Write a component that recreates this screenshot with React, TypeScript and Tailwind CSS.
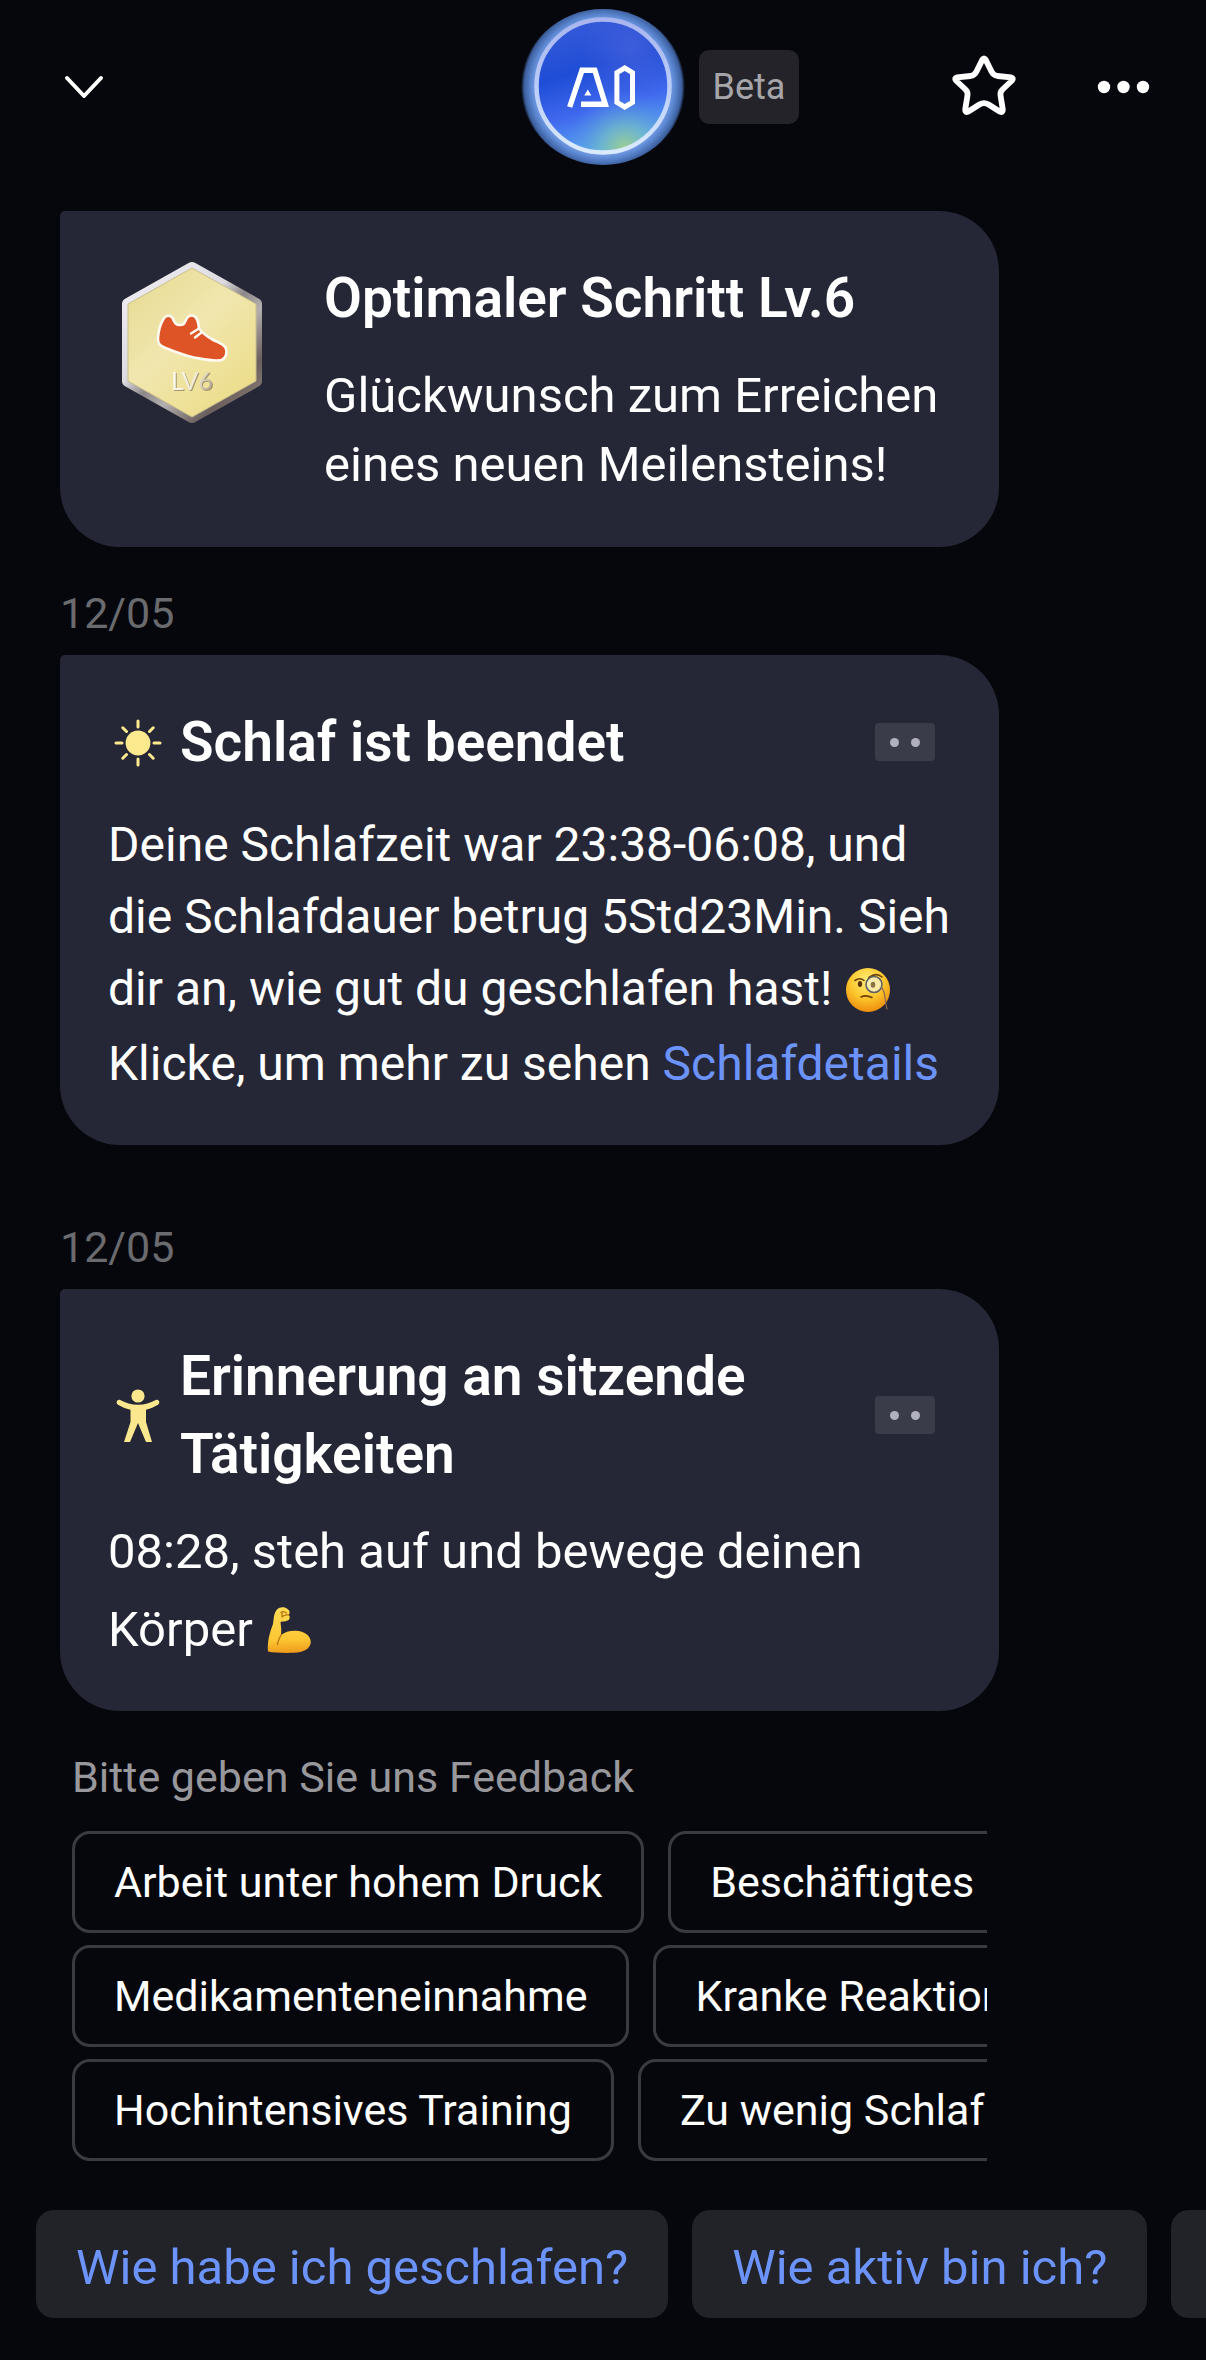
import * as React from "react";

type CardProps = {
  children: React.ReactNode;
};

const FEEDBACK_ROWS = [
  ["Arbeit unter hohem Druck", "Beschäftigtes"],
  ["Medikamenteneinnahme", "Kranke Reaktion"],
  ["Hochintensives Training", "Zu wenig Schlaf"],
];

const SUGGESTIONS = [
  "Wie habe ich geschlafen?",
  "Wie aktiv bin ich?",
  "Mein Trainingsplan?",
];

function ChevronIcon() {
  return (
    <svg viewBox="0 0 48 48" className="size-12" fill="none" aria-hidden="true">
      <path d="M7 15 24 33 41 15" stroke="#fff" strokeWidth="4" strokeLinecap="round" strokeLinejoin="round" />
    </svg>
  );
}

function StarIcon() {
  return (
    <svg viewBox="0 0 66 66" className="size-[66px]" fill="none" aria-hidden="true">
      <path
        d="M31.4 5.6Q33 3 34.6 5.6L40.5 17.5Q42.3 21.3 46.5 22L60 23.3Q63 24 61 26.5L51.5 35.5Q48.8 38.3 49.6 42L51.8 55.5Q52 59 49 57.7L37.2 50.3Q33 48 28.8 50.3L17 57.7Q14 59 14.2 55.5L16.4 42Q17.2 38.3 14.5 35.5L5 26.5Q3 24 6 23.3L19.5 22Q23.7 21.3 25.5 17.5Z"
        stroke="#fff"
        strokeWidth="5.8"
        strokeLinejoin="round"
      />
    </svg>
  );
}

function MoreIcon() {
  return (
    <svg viewBox="0 0 60 24" className="h-6 w-[60px]" fill="#fff" aria-hidden="true">
      <circle cx="10" cy="12" r="6.2" />
      <circle cx="29.5" cy="12" r="6.2" />
      <circle cx="49" cy="12" r="6.2" />
    </svg>
  );
}

function AiLogo() {
  return (
    <svg viewBox="0 0 168 168" className="size-[168px]" fill="none" role="img" aria-label="AI">
      <defs>
        <linearGradient id="ai-disc" x1="60" y1="20" x2="96" y2="150" gradientUnits="userSpaceOnUse">
          <stop offset="0" stopColor="#3459d8" />
          <stop offset="0.35" stopColor="#1f4dd6" />
          <stop offset="0.65" stopColor="#3f68ee" />
          <stop offset="1" stopColor="#5fb4f0" />
        </linearGradient>
        <radialGradient id="ai-glow" cx="106" cy="146" r="60" gradientUnits="userSpaceOnUse">
          <stop offset="0" stopColor="#9fd08c" />
          <stop offset="0.4" stopColor="#74bcc4" stopOpacity="0.7" />
          <stop offset="1" stopColor="#4d86f0" stopOpacity="0" />
        </radialGradient>
        <radialGradient id="ai-violet" cx="112" cy="46" r="50" gradientUnits="userSpaceOnUse">
          <stop offset="0" stopColor="#4460dc" stopOpacity="0.8" />
          <stop offset="1" stopColor="#4460dc" stopOpacity="0" />
        </radialGradient>
        <radialGradient id="ai-halo" cx="84" cy="84" r="82" gradientUnits="userSpaceOnUse">
          <stop offset="0.78" stopColor="#86aaf0" />
          <stop offset="0.88" stopColor="#5a86d0" />
          <stop offset="0.96" stopColor="#3d609f" />
          <stop offset="1" stopColor="#3d609f" stopOpacity="0" />
        </radialGradient>
        <linearGradient id="ai-ring" x1="84" y1="14" x2="84" y2="152" gradientUnits="userSpaceOnUse">
          <stop offset="0" stopColor="#a9b4ee" />
          <stop offset="0.5" stopColor="#b9ccfa" />
          <stop offset="1" stopColor="#dcecff" />
        </linearGradient>
      </defs>
      <ellipse cx="84" cy="84" rx="82" ry="78" fill="url(#ai-halo)" />
      <circle cx="84" cy="83" r="66" fill="url(#ai-disc)" />
      <circle cx="84" cy="83" r="66" fill="url(#ai-violet)" />
      <circle cx="84" cy="83" r="66" fill="url(#ai-glow)" />
      <circle cx="84" cy="83" r="66.5" stroke="url(#ai-ring)" strokeWidth="4.5" />
      <polyline points="50.7,104 63,67.3 75.8,67.3 86.3,101.2 62,101.2" stroke="#fff" strokeWidth="5.4" />
      <path d="M68.8 86.5 72.3 92.5H65.3Z" fill="#fff" />
      <path d="M105.7 65 113.5 69.6V99.4L105.7 104 97.9 99.4V69.6Z" stroke="#fff" strokeWidth="5" />
    </svg>
  );
}

function StepBadge() {
  return (
    <svg viewBox="0 0 168 168" className="size-[168px] shrink-0" fill="none" role="img" aria-label="Schritt-Abzeichen">
      <defs>
        <linearGradient id="badge-rim" x1="20" y1="20" x2="150" y2="150" gradientUnits="userSpaceOnUse">
          <stop offset="0" stopColor="#f0eef2" />
          <stop offset="0.38" stopColor="#dcdbe0" />
          <stop offset="0.5" stopColor="#8c8788" />
          <stop offset="0.62" stopColor="#b5b0b0" />
          <stop offset="0.82" stopColor="#6a5f5c" />
          <stop offset="1" stopColor="#8d827b" />
        </linearGradient>
        <linearGradient id="badge-face" x1="30" y1="20" x2="140" y2="140" gradientUnits="userSpaceOnUse">
          <stop offset="0" stopColor="#e7dc95" />
          <stop offset="0.45" stopColor="#f1e6ae" />
          <stop offset="1" stopColor="#ecdd88" />
        </linearGradient>
        <linearGradient id="badge-level" x1="64" y1="112" x2="104" y2="132" gradientUnits="userSpaceOnUse">
          <stop offset="0" stopColor="#fffdf5" />
          <stop offset="0.6" stopColor="#efe8d8" />
          <stop offset="1" stopColor="#a89a86" />
        </linearGradient>
      </defs>
      <path
        d="M84 9 148 45V122L84 158 20 122V45Z"
        fill="url(#badge-rim)"
        stroke="url(#badge-rim)"
        strokeWidth="12"
        strokeLinejoin="round"
      />
      <path d="M84 9 148 45V122L84 158 20 122V45Z" fill="url(#badge-face)" stroke="#c9bf8d" />
      <path
        d="M50 79C50.5 71 53 64 55.5 60C57.5 56 62 55.5 64.5 59C66 61 66 64.5 69 65.5C72.5 66.5 76 66 77.5 62C79 57.5 82.5 55.5 86 57C90 59 90.5 64 91 69.5C94.5 74 99 77.5 104.5 80.5C109 83 115 84.500 117.5 88.5C119.500 93 118.5 99 113.5 101C107 103 95 100 84.9 98.3C75 96 65 92 56.3 88.5C51.5 86 49.5 84 50 79Z"
        fill="#de5426"
        stroke="#fffaf0"
        strokeWidth="2.6"
        strokeLinejoin="round"
      />
      <path d="M83 74.5 91 69.5M87 78.5 93.5 73.5" stroke="#fffaf0" strokeWidth="2.4" strokeLinecap="round" />
      <text
        x="84"
        y="131"
        textAnchor="middle"
        fill="url(#badge-level)"
        className="font-['Lato',sans-serif] text-[25px] font-normal drop-shadow-[1px_1px_0_#a39568]"
      >
        LV6
      </text>
    </svg>
  );
}

function SunIcon() {
  return (
    <svg viewBox="0 0 60 60" className="size-[60px] shrink-0" aria-hidden="true">
      <circle cx="30" cy="31" r="12.4" fill="#fde98e" />
      <path
        d="M30 9V15M30 47V53M8 31H14M46 31H52M14.8 15.8 18.5 19.5M41.5 42.5 45.2 46.2M14.8 46.2 18.5 42.5M41.5 19.5 45.2 15.8"
        stroke="#fde98e"
        strokeWidth="3"
        strokeLinecap="round"
      />
    </svg>
  );
}

function PersonIcon() {
  return (
    <svg viewBox="0 0 60 60" className="size-[60px] shrink-0" fill="#fbe88e" aria-hidden="true">
      <circle cx="30" cy="11" r="6.6" />
      <path d="M12.2 15C18 18.200 23 19.7 30 19.7S42 18.2 47.8 15C51 14 52.7 18 50 19.7C46 22 42.5 23.6 38 24.8V37L44 57H38L30 38 22 57H16L22.5 37V24.8C17.5 23.6 14 22 10 19.7C7.3 18 9 14 12.2 15Z" />
    </svg>
  );
}

function MonocleEmoji() {
  return (
    <svg viewBox="0 0 48 48" className="inline-block size-12 align-[-9px]" fill="none" role="img" aria-label="🧐">
      <defs>
        <radialGradient id="face" cx="23" cy="15" r="30" gradientUnits="userSpaceOnUse">
          <stop offset="0" stopColor="#fff07a" />
          <stop offset="0.55" stopColor="#fdc92f" />
          <stop offset="1" stopColor="#f0920f" />
        </radialGradient>
      </defs>
      <circle cx="24" cy="24" r="22" fill="url(#face)" />
      <path d="M11 14.5Q16 11 20 14.5M25 11.5Q32 6 38 11" stroke="#6b3f0b" strokeWidth="1.6" strokeLinecap="round" />
      <ellipse cx="16" cy="18" rx="2.2" ry="3" fill="#5a330a" />
      <circle cx="30" cy="18.5" r="8" fill="#f7f0c8" fillOpacity="0.75" stroke="#5f6066" strokeWidth="1.6" />
      <ellipse cx="29" cy="18.8" rx="2.3" ry="3" fill="#8a7340" />
      <path d="M37.5 21.5C42 26 40.5 34 43 43" stroke="#8a6a55" strokeWidth="1.2" strokeLinecap="round" />
      <path d="M17 31Q22 28.5 28 31.5" stroke="#6b3f0b" strokeWidth="1.6" strokeLinecap="round" />
    </svg>
  );
}

function MuscleEmoji() {
  return (
    <svg viewBox="0 0 48 48" className="inline-block size-12 align-[-8px]" fill="none" role="img" aria-label="💪">
      <defs>
        <linearGradient id="arm" x1="24" y1="2" x2="26" y2="47" gradientUnits="userSpaceOnUse">
          <stop offset="0" stopColor="#ffdc55" />
          <stop offset="0.7" stopColor="#fdc633" />
          <stop offset="1" stopColor="#ee9a1a" />
        </linearGradient>
      </defs>
      <path
        d="M12 3.5C15 0.5 20 0.8 22.5 3C25 4.5 25 7 23.8 9C25.5 11 24.8 13.8 22.5 14.5C20 16 17.5 15 15.5 16C15.8 20 16.8 24 16 29C20 26 25 24.5 31 24.8C39 25 45.5 29.5 45.8 36C45.5 43 38 46.5 29 46.8C19 47.2 9 46.8 3 45.5C2.2 36 4.5 27 8 18C9 12 8.8 7 12 3.5Z"
        fill="url(#arm)"
      />
      <path
        d="M16 29C14 33 12.5 36 12.5 38.5M16 6.5Q18.5 4.5 21.5 7M17.5 10.5Q20.5 8 23.5 9.2M17 6.5V11"
        stroke="#b8740f"
        strokeWidth="1.3"
        strokeLinecap="round"
      />
    </svg>
  );
}

function CardMenuButton() {
  return (
    <button
      type="button"
      aria-label="Kartenoptionen"
      className="flex h-[38px] w-[60px] shrink-0 items-center justify-center gap-3 rounded bg-[#3b3c4a]"
    >
      <span className="size-[9px] rounded-full bg-[#b0b0be]" />
      <span className="size-[9px] rounded-full bg-[#b0b0be]" />
    </button>
  );
}

function MessageCard({ children }: CardProps) {
  return (
    <article className="rounded-[60px] rounded-tl-[5px] bg-[#262736] px-12 pt-12 pb-[42px]">
      {children}
    </article>
  );
}

function CardHeading({ icon, title }: { icon: React.ReactNode; title: string }) {
  return (
    <div className="flex items-center gap-3 pr-4">
      {icon}
      <h2 className="flex-1 pr-20 text-[55px] leading-[78px] font-semibold">{title}</h2>
      <CardMenuButton />
    </div>
  );
}

function DateLabel({ children }: CardProps) {
  return <p className="mb-3 text-[43px] leading-[60px] text-[#6a6b6f]">{children}</p>;
}

export default function App() {
  return (
    <div className="flex min-h-screen flex-col overflow-hidden bg-[#06070c] font-['Roboto',sans-serif] text-white">
      <header className="grid h-[174px] grid-cols-[1fr_auto_1fr] items-center">
        <button type="button" aria-label="Schließen" className="ml-15 justify-self-start">
          <ChevronIcon />
        </button>
        <AiLogo />
        <div className="flex items-center pr-[52px] pl-3">
          <span className="flex h-[74px] w-[100px] items-center justify-center rounded-[10px] bg-[#242329] text-[36px] text-[#a6a5a9]">
            Beta
          </span>
          <button type="button" aria-label="Favorit" className="ml-auto">
            <StarIcon />
          </button>
          <button type="button" aria-label="Mehr" className="ml-[77px]">
            <MoreIcon />
          </button>
        </div>
      </header>

      <main className="pt-[37px] pr-[207px] pl-15">
        <article className="flex items-start gap-12 rounded-[60px] rounded-tl-[5px] bg-[#262736] p-12">
          <StepBadge />
          <div>
            <h2 className="text-[55px] leading-[78px] font-semibold">Optimaler Schritt Lv.6</h2>
            <p className="mt-6 text-[49px] leading-[69px]">
              Glückwunsch zum Erreichen eines neuen Meilensteins!
            </p>
          </div>
        </article>

        <section className="mt-9">
          <DateLabel>12/05</DateLabel>
          <MessageCard>
            <CardHeading icon={<SunIcon />} title="Schlaf ist beendet" />
            <p className="mt-7 text-[48px] leading-[72px]">
              Deine Schlafzeit war 23:38-06:08, und die Schlafdauer betrug 5Std23Min. Sieh dir an, wie gut du
              geschlafen hast! <MonocleEmoji />
            </p>
            <p className="text-[48px] leading-[78px]">
              Klicke, um mehr zu sehen{" "}
              <a href="#schlafdetails" className="text-[#6b93fa]">
                Schlafdetails
              </a>
            </p>
          </MessageCard>
        </section>

        <section className="mt-[72px]">
          <DateLabel>12/05</DateLabel>
          <MessageCard>
            <CardHeading icon={<PersonIcon />} title="Erinnerung an sitzende Tätigkeiten" />
            <p className="mt-5 text-[49px] leading-[78px]">
              08:28, steh auf und bewege deinen Körper <MuscleEmoji />
            </p>
          </MessageCard>
        </section>

        <section className="mt-9 px-3">
          <p className="text-[43px] leading-[60px] text-[#98989c]">Bitte geben Sie uns Feedback</p>
          <div className="mt-6 flex flex-col gap-3 overflow-hidden">
            {FEEDBACK_ROWS.map((row) => (
              <div key={row[0]} className="flex gap-6">
                {row.map((label) => (
                  <button
                    key={label}
                    type="button"
                    className="h-[102px] min-w-[384px] shrink-0 rounded-[18px] border-3 border-[#3a3b41] px-[39px] text-left text-[43px] whitespace-nowrap"
                  >
                    {label}
                  </button>
                ))}
              </div>
            ))}
          </div>
        </section>
      </main>

      <footer className="mt-auto flex gap-6 pt-12 pb-[42px] pl-9">
        {SUGGESTIONS.map((question) => (
          <button
            key={question}
            type="button"
            className="h-[108px] shrink-0 rounded-[18px] bg-[#222328] px-10 pt-2 text-[49px] whitespace-nowrap text-[#6b93fa]"
          >
            {question}
          </button>
        ))}
      </footer>
    </div>
  );
}
